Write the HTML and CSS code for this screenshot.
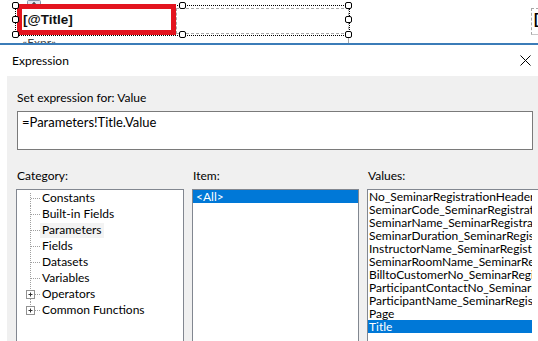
FILE: index.html
```html
<!DOCTYPE html>
<html lang="en">
<head>
    <meta charset="UTF-8">
    <meta name="viewport" content="width=device-width, initial-scale=1.0">
    <title>Expression</title>
    <link rel="stylesheet" href="styles.css">
</head>
<body>

    <!-- Report designer surface (behind the dialog) -->
    <div class="designer">
        <div class="move-grip">
            <svg width="14" height="13" viewBox="0 0 14 13">
                <rect x="0.5" y="0.5" width="13" height="12" rx="1" fill="#dde5ef" stroke="#8595ab"/>
                <path d="M7 2.5 V11 M4.5 5 L7 2.5 L9.5 5 M4 8.5 H10" stroke="#222" fill="none"/>
            </svg>
        </div>
        <div class="selection"></div>
        <div class="textbox-edge"></div>
        <div class="textbox-edge-down"></div>
        <div class="title-box">[@Title]</div>
        <div class="handle h-l1"></div>
        <div class="handle h-l2"></div>
        <div class="handle h-l3"></div>
        <div class="handle h-m1"></div>
        <div class="handle h-m3"></div>
        <div class="handle h-r1"></div>
        <div class="handle h-r2"></div>
        <div class="handle h-r3"></div>
        <div class="next-box">[</div>
        <div class="expr-peek">«Expr»</div>
    </div>
    <div class="rule"></div>

    <!-- Expression dialog -->
    <div class="dialog">
        <div class="titlebar">
            <span>Expression</span>
            <svg class="close" width="11" height="11" viewBox="0 0 11 11">
                <path d="M0.5 0.5 L10.5 10.5 M10.5 0.5 L0.5 10.5" stroke="#000" fill="none"/>
            </svg>
        </div>
        <div class="dialog-body">
            <div class="label">Set expression for: Value</div>
            <div class="expr-box">=Parameters!Title.Value</div>

            <div class="panes">
                <div class="pane pane-category">
                    <div class="label">Category:</div>
                    <div class="listbox tree">
                        <div class="node">
                            <svg width="25" height="16"><path d="M13.5 3 V16 M14 8.5 H23" class="dots"/></svg>
                            <span>Constants</span>
                        </div>
                        <div class="node">
                            <svg width="25" height="16"><path d="M13.5 0 V16 M14 8.5 H23" class="dots"/></svg>
                            <span>Built-in Fields</span>
                        </div>
                        <div class="node">
                            <svg width="25" height="16"><path d="M13.5 0 V16 M14 8.5 H23" class="dots"/></svg>
                            <span class="soft">Parameters</span>
                        </div>
                        <div class="node">
                            <svg width="25" height="16"><path d="M13.5 0 V16 M14 8.5 H23" class="dots"/></svg>
                            <span>Fields</span>
                        </div>
                        <div class="node">
                            <svg width="25" height="16"><path d="M13.5 0 V16 M14 8.5 H23" class="dots"/></svg>
                            <span>Datasets</span>
                        </div>
                        <div class="node">
                            <svg width="25" height="16"><path d="M13.5 0 V16 M14 8.5 H23" class="dots"/></svg>
                            <span>Variables</span>
                        </div>
                        <div class="node">
                            <svg width="25" height="16">
                                <path d="M13.5 0 V4 M13.5 13 V16 M18 8.5 H23" class="dots"/>
                                <rect x="9.5" y="4.5" width="8" height="8" fill="#fff" stroke="#919191"/>
                                <path d="M11.5 8.5 H15.5 M13.5 6.5 V10.5" stroke="#333"/>
                            </svg>
                            <span>Operators</span>
                        </div>
                        <div class="node">
                            <svg width="25" height="16">
                                <path d="M13.5 0 V4 M18 8.5 H23" class="dots"/>
                                <rect x="9.5" y="4.5" width="8" height="8" fill="#fff" stroke="#919191"/>
                                <path d="M11.5 8.5 H15.5 M13.5 6.5 V10.5" stroke="#333"/>
                            </svg>
                            <span>Common Functions</span>
                        </div>
                    </div>
                </div>

                <div class="pane pane-item">
                    <div class="label">Item:</div>
                    <div class="listbox">
                        <div class="row selected">&lt;All&gt;</div>
                    </div>
                </div>

                <div class="pane pane-values">
                    <div class="label">Values:</div>
                    <div class="listbox values">
                        <div class="row">No_SeminarRegistrationHeader</div>
                        <div class="row">SeminarCode_SeminarRegistrationHeader</div>
                        <div class="row">SeminarName_SeminarRegistrationHeader</div>
                        <div class="row">SeminarDuration_SeminarRegistrationHeader</div>
                        <div class="row">InstructorName_SeminarRegistrationHeader</div>
                        <div class="row">SeminarRoomName_SeminarRegistrationHeader</div>
                        <div class="row">BilltoCustomerNo_SeminarRegistrationHeader</div>
                        <div class="row">ParticipantContactNo_SeminarRegistrationLine</div>
                        <div class="row">ParticipantName_SeminarRegistrationLine</div>
                        <div class="row">Page</div>
                        <div class="row selected">Title</div>
                    </div>
                </div>
            </div>
        </div>
    </div>

</body>
</html>
```

FILE: styles.css
```css
body {
    margin: 0;
    width: 538px;
    height: 341px;
    overflow: hidden;
    background-color: white;
    font-family: "Segoe UI", Lato, "Noto Sans", sans-serif;
    font-size: 12px;
    color: #000;
}

/* Designer surface */
.designer {
    position: relative;
    height: 43px;
}

.move-grip {
    position: absolute;
    left: 27px;
    top: 0;
    height: 13px;
}

.move-grip svg {
    display: block;
}

.selection {
    position: absolute;
    left: 15px;
    top: 5px;
    width: 333px;
    height: 29px;
    border: 1px dotted #000;
}

.textbox-edge {
    position: absolute;
    left: 176px;
    top: 8px;
    width: 171px;
    height: 24px;
    border: 1px dashed #a8a8a8;
}

.textbox-edge-down {
    position: absolute;
    left: 348px;
    top: 37px;
    height: 6px;
    border-left: 1px dashed #a8a8a8;
}

.title-box {
    position: absolute;
    left: 17px;
    top: 4px;
    width: 159px;
    height: 31px;
    box-sizing: border-box;
    border: 5px solid #e3141f;
    background-color: white;
    padding-left: 1px;
    display: flex;
    align-items: center;
    font-family: "Liberation Sans", Arial, sans-serif;
    font-size: 13.5px;
    font-weight: bold;
    color: #111;
}

.handle {
    position: absolute;
    width: 5px;
    height: 5px;
    border: 1px solid #000;
    border-radius: 2px;
    background-color: white;
}

.h-l1 { left: 12px; top: 2px; }
.h-l2 { left: 12px; top: 16px; }
.h-l3 { left: 12px; top: 31px; }
.h-m1 { left: 179px; top: 2px; }
.h-m3 { left: 179px; top: 31px; }
.h-r1 { left: 345px; top: 2px; }
.h-r2 { left: 345px; top: 16px; }
.h-r3 { left: 345px; top: 31px; }

.next-box {
    position: absolute;
    left: 531px;
    top: 8px;
    width: 20px;
    height: 25px;
    border-left: 1px dashed #a8a8a8;
    border-top: 1px dashed #a8a8a8;
    border-bottom: 1px solid #c8c8c8;
    padding-left: 2px;
    font-family: "Liberation Sans", Arial, sans-serif;
    font-size: 14px;
    font-weight: bold;
    line-height: 20px;
}

.expr-peek {
    position: absolute;
    left: 22px;
    top: 37px;
    height: 6px;
    overflow: hidden;
    line-height: 12px;
    color: #444;
}

.rule {
    height: 2px;
    background-color: #3b7cb8;
}

/* Dialog */
.titlebar {
    height: 31px;
    padding: 0 7px 0 12px;
    display: flex;
    align-items: center;
    justify-content: space-between;
    background-color: white;
}

.dialog-body {
    margin-left: 7px;
    padding: 14px 0 0 10px;
    height: 300px;
    background-color: #f0f0f0;
}

.label {
    line-height: 16px;
}

.expr-box {
    margin-top: 5px;
    height: 35px;
    width: 506px;
    padding: 2px 4px 0;
    border: 1px solid #7a7a7a;
    background-color: white;
    font-size: 13px;
    line-height: 17px;
}

.panes {
    display: flex;
    gap: 8px;
    margin-top: 18px;
    margin-left: -1px;
}

.pane {
    flex-shrink: 0;
}

.pane .label {
    padding-left: 1px;
}

.pane-category { width: 168px; }
.pane-item { width: 167px; }
.pane-values { width: 200px; }

.listbox {
    margin-top: 5px;
    height: 160px;
    border: 1px solid #828790;
    background-color: white;
    overflow: hidden;
}

.node {
    display: flex;
    align-items: center;
    height: 16px;
}

.node svg {
    display: block;
    flex-shrink: 0;
}

.node span {
    line-height: 14px;
    padding-bottom: 1px;
}

.dots {
    stroke: #a0a0a0;
    stroke-dasharray: 1 1;
    fill: none;
}

.node .soft {
    background-color: #f3f3f3;
    margin-left: -2px;
    padding: 0 2px 1px;
}

.row {
    height: 13px;
    line-height: 13px;
    padding-left: 3px;
    white-space: nowrap;
    overflow: hidden;
}

.values .row {
    width: 163px;
    padding-left: 1px;
}

.selected {
    background-color: #0078d7;
    color: white;
}
```
